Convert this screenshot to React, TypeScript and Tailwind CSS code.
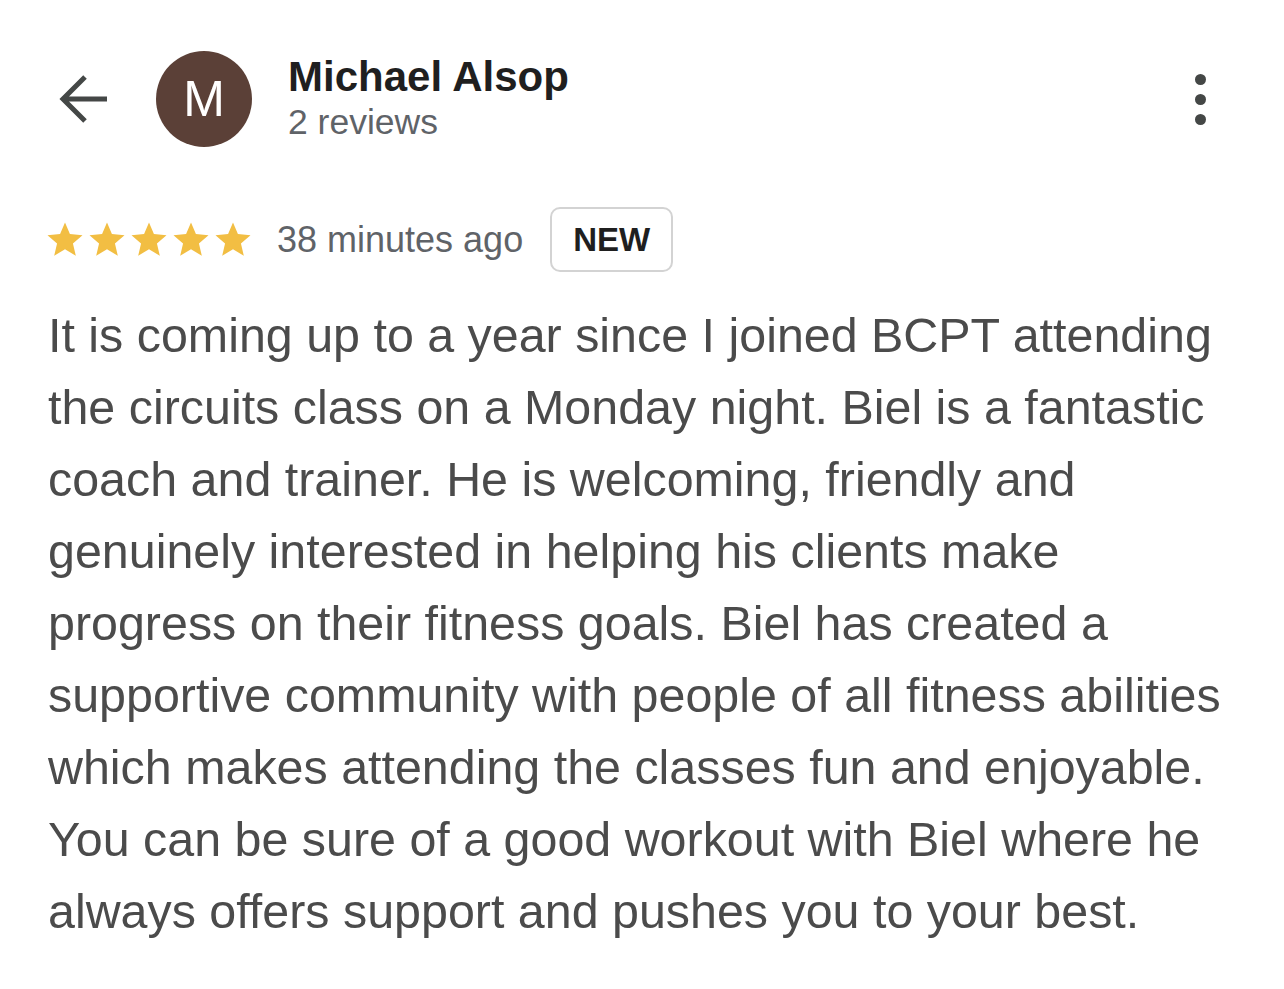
import React from 'react';

const REVIEW =
  'It is coming up to a year since I joined BCPT attending the circuits class on a Monday night. Biel is a fantastic coach and trainer. He is welcoming, friendly and genuinely interested in helping his clients make progress on their fitness goals. Biel has created a supportive community with people of all fitness abilities which makes attending the classes fun and enjoyable. You can be sure of a good workout with Biel where he always offers support and pushes you to your best.';

function Star() {
  return (
    <svg viewBox="0 0 24 24" className="w-[42px] h-[42px] shrink-0">
      <path
        fill="#F2BE43"
        d="M12 17.27L18.18 21l-1.64-7.03L22 9.24l-7.19-.61L12 2 9.19 8.63 2 9.24l5.46 4.73L5.82 21z"
      />
    </svg>
  );
}

export default function App() {
  return (
    <div
      className="w-[1284px] h-[989px] bg-white text-[#4a4a4a] overflow-hidden"
      style={{ fontFamily: '"Liberation Sans", Arial, sans-serif' }}
    >
      {/* header */}
      <div className="flex items-center h-[96px] mt-[51px] pl-[59px] pr-[78px]">
        <svg viewBox="0 0 50 50" className="w-[50px] h-[50px] shrink-0">
          <path d="M48 25H4M26 3L4 25l22 22" fill="none" stroke="#444746" strokeWidth="5" />
        </svg>
        <div className="ml-[47px] w-[96px] h-[96px] rounded-full bg-[#5b4037] flex items-center justify-center shrink-0">
          <span className="text-white text-[50px] leading-none">M</span>
        </div>
        <div className="ml-[36px] flex flex-col -mt-[3px]">
          <span className="text-[42px] font-bold text-[#1f1f1f] leading-[48px]">Michael Alsop</span>
          <span className="text-[35.5px] text-[#5f6368] leading-[42px]">2 reviews</span>
        </div>
        <div className="ml-auto flex flex-col items-center gap-[9px]">
          <div className="w-[11px] h-[11px] rounded-full bg-[#444746]" />
          <div className="w-[11px] h-[11px] rounded-full bg-[#444746]" />
          <div className="w-[11px] h-[11px] rounded-full bg-[#444746]" />
        </div>
      </div>

      {/* rating row */}
      <div className="flex items-center mt-[60px] pl-[44px] h-[65px]">
        <div className="flex">
          <Star />
          <Star />
          <Star />
          <Star />
          <Star />
        </div>
        <span className="ml-[23px] text-[36px] text-[#5f6368]">38 minutes ago</span>
        <span className="ml-[27px] h-[65px] px-[21px] flex items-center border-2 border-[#d3d3d3] rounded-[10px] text-[33px] font-bold text-[#1f1f1f]">
          NEW
        </span>
      </div>

      {/* body */}
      <p className="mt-[27px] pl-[48px] pr-[40px] text-[48.4px] leading-[72px] text-[#4b4b4b]">{REVIEW}</p>
    </div>
  );
}
